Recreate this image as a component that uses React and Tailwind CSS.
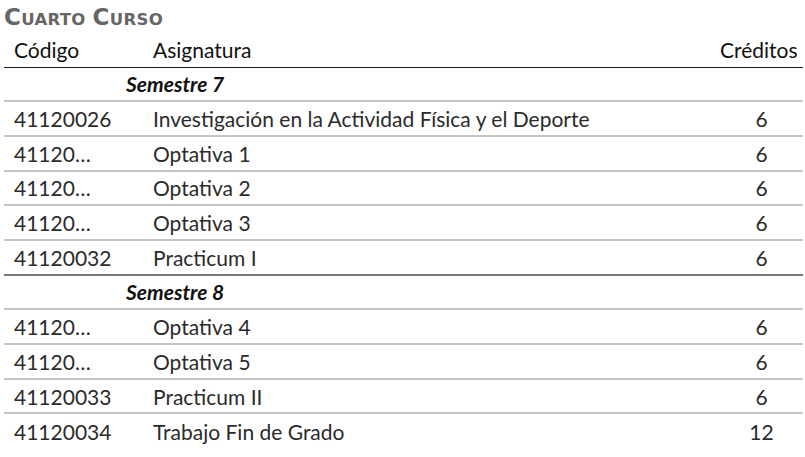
const semestres = [
  {
    nombre: 'Semestre 7',
    filas: [
      ['41120026', 'Investigación en la Actividad Física y el Deporte', '6'],
      ['41120…', 'Optativa 1', '6'],
      ['41120…', 'Optativa 2', '6'],
      ['41120…', 'Optativa 3', '6'],
      ['41120032', 'Practicum I', '6'],
    ],
  },
  {
    nombre: 'Semestre 8',
    filas: [
      ['41120…', 'Optativa 4', '6'],
      ['41120…', 'Optativa 5', '6'],
      ['41120033', 'Practicum II', '6'],
      ['41120034', 'Trabajo Fin de Grado', '12'],
    ],
  },
]

function Fila({ codigo, asignatura, creditos, borde }) {
  return (
    <div className={`grid grid-cols-[139px_1fr_83px] h-[34.7px] items-center text-[#2b2b2b] ${borde}`}>
      <div className="pl-[10px]">{codigo}</div>
      <div className="pl-[10px]">{asignatura}</div>
      <div className="text-center">{creditos}</div>
    </div>
  )
}

export default function App() {
  return (
    <div className="w-[805px] h-[457px] bg-white font-['Lato',sans-serif] text-[21px] leading-none overflow-hidden">
      <div className="pl-[4px] pr-[2px]">
        {/* Título (versalitas a mano) */}
        <div className="h-[32px] pt-[6px] flex items-baseline font-['DejaVu_Sans',sans-serif] font-bold text-[#666666] tracking-[0.3px]">
          <span className="text-[23px]">C</span>
          <span className="text-[16.5px]">UARTO</span>
          <span className="text-[23px] ml-[7px]">C</span>
          <span className="text-[16.5px]">URSO</span>
        </div>

        {/* Cabecera */}
        <div className="grid grid-cols-[139px_1fr_83px] h-[35.5px] items-center text-[#111] border-b-[1.5px] border-[#1a1a1a]">
          <div className="pl-[10px]">Código</div>
          <div className="pl-[10px]">Asignatura</div>
          <div className="text-right pr-[6px]">Créditos</div>
        </div>

        {semestres.map((s, si) => (
          <div key={s.nombre}>
            <div className="h-[34.7px] flex items-center pl-[122px] font-bold italic text-[#111] border-b-2 border-[#c6c6c6]">
              {s.nombre}
            </div>
            {s.filas.map((f, i) => {
              const ultima = i === s.filas.length - 1
              let borde = 'border-b-2 border-[#c6c6c6]'
              if (ultima && si === 0) borde = 'border-b-2 border-[#7a7a7a]'
              if (ultima && si === semestres.length - 1) borde = ''
              return <Fila key={i} codigo={f[0]} asignatura={f[1]} creditos={f[2]} borde={borde} />
            })}
          </div>
        ))}
      </div>
    </div>
  )
}
